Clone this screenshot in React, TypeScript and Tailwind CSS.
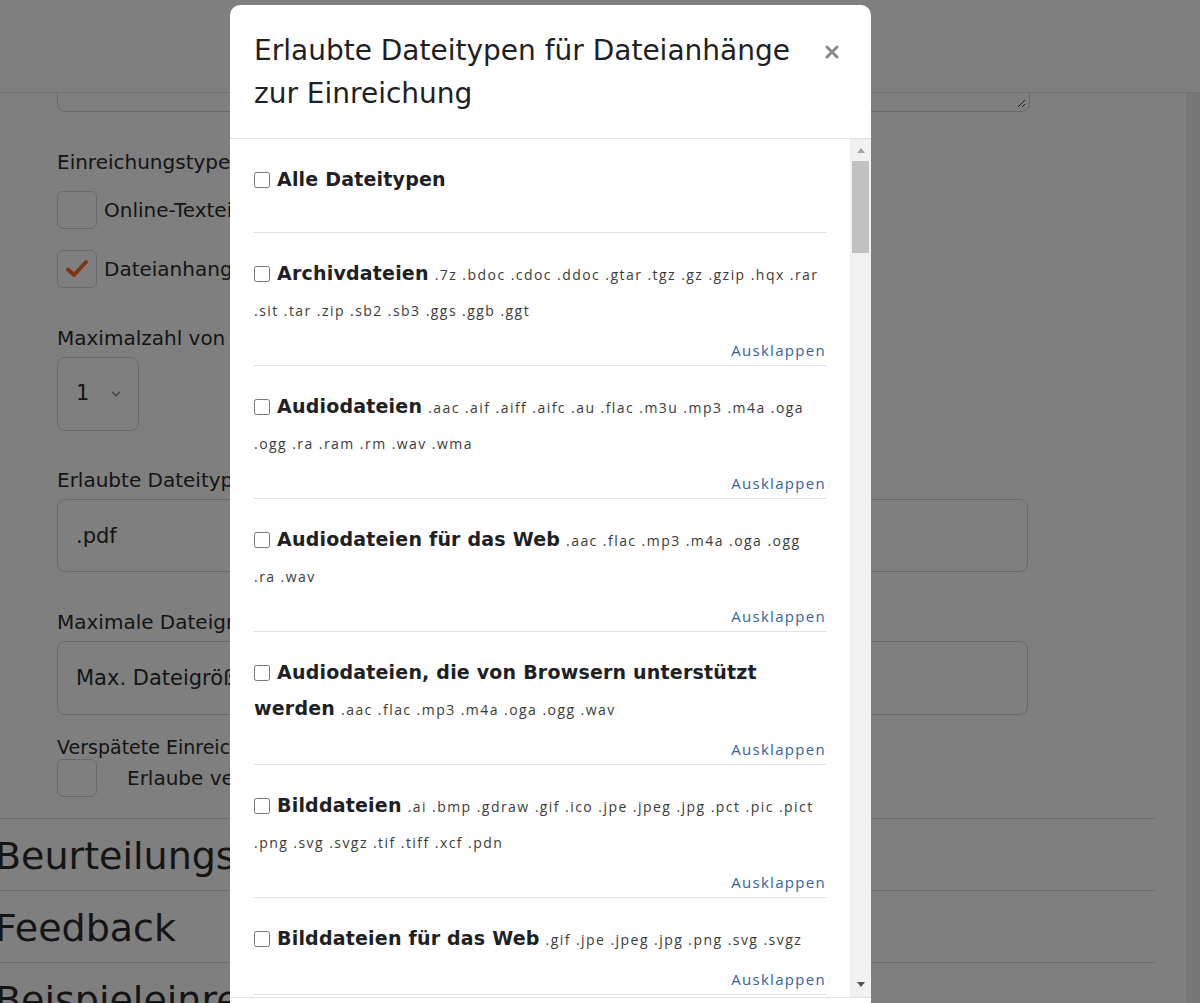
import { ChevronDown } from 'lucide-react'

const TYPES = [
  { label: 'Archivdateien', ext: '.7z .bdoc .cdoc .ddoc .gtar .tgz .gz .gzip .hqx .rar .sit .tar .zip .sb2 .sb3 .ggs .ggb .ggt' },
  { label: 'Audiodateien', ext: '.aac .aif .aiff .aifc .au .flac .m3u .mp3 .m4a .oga .ogg .ra .ram .rm .wav .wma' },
  { label: 'Audiodateien für das Web', ext: '.aac .flac .mp3 .m4a .oga .ogg .ra .wav' },
  { label: 'Audiodateien, die von Browsern unterstützt werden', ext: '.aac .flac .mp3 .m4a .oga .ogg .wav' },
  { label: 'Bilddateien', ext: '.ai .bmp .gdraw .gif .ico .jpe .jpeg .jpg .pct .pic .pict .png .svg .svgz .tif .tiff .xcf .pdn' },
  { label: 'Bilddateien für das Web', ext: '.gif .jpe .jpeg .jpg .png .svg .svgz' },
  { label: 'Dokumentdateien', ext: '.doc .docx .epub .gdoc .odt .oth .ott .pdf .rtf' },
]

const HEAD = "font-['DejaVu_Sans',sans-serif]"

function BoxCheck({ checked = false }: { checked?: boolean }) {
  return (
    <span className="flex h-[38px] w-[40px] shrink-0 items-center justify-center rounded-md border border-[#ced4da] bg-white">
      {checked && (
        <svg width="24" height="22" viewBox="0 0 24 22" fill="none">
          <path d="M3 11.5 L9 17 L21 4" stroke="#ff6a2a" strokeWidth="4" strokeLinecap="round" strokeLinejoin="round" />
        </svg>
      )}
    </span>
  )
}

function Background() {
  return (
    <div className={`${HEAD} text-[#2b2b2b]`}>
      <header className="h-[93px] border-b border-[#e6e6e6] bg-white" />
      <div className="flex h-[910px]">
        <main className="flex-1 overflow-hidden">
          <div className="pl-[57px] pr-[31px]">
            <div className="relative -mt-[41px] h-[60px] w-[973px] rounded-lg border border-[#ced4da]">
              <svg className="absolute bottom-[3px] right-[3px]" width="10" height="10" viewBox="0 0 10 10">
                <path d="M9 2 L2 9 M9 6 L6 9" stroke="#444" strokeWidth="1" />
              </svg>
            </div>

            <div className="mt-[36px] text-[20px] leading-[28px]">Einreichungstypen</div>
            <div className="mt-[15px] flex items-center gap-[7px] text-[20px]">
              <BoxCheck />
              <span>Online-Texteingabe</span>
            </div>
            <div className="mt-[21px] flex items-center gap-[7px] text-[20px]">
              <BoxCheck checked />
              <span>Dateianhang</span>
            </div>

            <div className="mt-[36px] text-[20px] leading-[28px]">Maximalzahl von hochgeladenen Dateien</div>
            <div className="mt-[5px] flex h-[74px] w-[82px] items-center justify-between rounded-lg border border-[#ced4da] pl-[18px] pr-[15px] text-[21px]">
              <span>1</span>
              <ChevronDown size={14} strokeWidth={3} className="text-[#8f8f8f]" />
            </div>

            <div className="mt-[35px] text-[20px] leading-[28px]">Erlaubte Dateitypen</div>
            <div className="mt-[5px] flex h-[73px] w-[971px] items-center rounded-lg border border-[#ced4da] pl-[18px] pt-[3px] text-[21px]">
              .pdf
            </div>

            <div className="mt-[36px] text-[20px] leading-[28px]">Maximale Dateigröße</div>
            <div className="mt-[5px] flex h-[74px] w-[971px] items-center rounded-lg border border-[#ced4da] pl-[18px] pt-[2px] text-[21px]">
              Max. Dateigröße (Einreichung)
            </div>

            <div className="mt-[22px] text-[19px] leading-[20px]">Verspätete Einreichungen</div>
            <div className="mt-[2px] flex items-center gap-[30px] text-[20px]">
              <BoxCheck />
              <span>Erlaube verspätete Einreichungen</span>
            </div>
          </div>

          <div className="mt-[21px] mr-[31px]">
            {['Beurteilungskriterien', 'Feedback', 'Beispieleinreichungen'].map((h) => (
              <div key={h} className="flex h-[72px] items-center border-t border-[#dadada] pt-[2px]">
                <span className="-ml-[5px] text-[38px] leading-none">{h}</span>
              </div>
            ))}
          </div>
        </main>
        <div className="w-[14px] bg-[#eeeeee]" />
      </div>
    </div>
  )
}

function TypeRow({ label, ext, first }: { label: string; ext?: string; first?: boolean }) {
  return (
    <div className="border-b border-[#dee2e6] pt-[22px] pb-[3px]">
      <div className={`${HEAD} pr-[6px] text-[19px] leading-[36px]`}>
        <input type="checkbox" className="mr-[7px] h-[16px] w-[16px] align-[-2px]" />
        <span className="font-bold leading-none tracking-[0.2px] text-[#1d2125]">{label}</span>
        {ext && (
          <span className="ml-[6px] font-['Open_Sans',sans-serif] text-[14px] leading-none tracking-[1.45px] text-[#3a3a3a]">
            {ext}
          </span>
        )}
      </div>
      {first ? (
        <div className="h-[32px]" />
      ) : (
        <div className="mt-[11px] h-[24px] text-right font-['Open_Sans',sans-serif] text-[15px] leading-[24px] tracking-[1.3px] text-[#2f64a6]">
          Ausklappen
        </div>
      )}
    </div>
  )
}

function Modal() {
  return (
    <div className="absolute left-[230px] top-[5px] w-[641px] rounded-[10px] bg-white">
      <div className="flex items-start justify-between border-b border-[#dee2e6] pt-[24px] pb-[23px] pl-[24px] pr-[32px]">
        <h5 className={`${HEAD} text-[28px] leading-[43px] text-[#1d2125]`}>
          Erlaubte Dateitypen für Dateianhänge
          <br />
          zur Einreichung
        </h5>
        <button className="mt-[16px] text-[#8a8a8a]" aria-label="Schließen">
          <svg width="14" height="14" viewBox="0 0 14 14">
            <path d="M2 2 L12 12 M12 2 L2 12" stroke="currentColor" strokeWidth="3" strokeLinecap="round" />
          </svg>
        </button>
      </div>

      <div className="flex h-[858px]">
        <div className="flex-1 overflow-hidden px-[24px]">
          <TypeRow label="Alle Dateitypen" first />
          {TYPES.map((t) => (
            <TypeRow key={t.label} label={t.label} ext={t.ext} />
          ))}
        </div>
        <div className="flex w-[21px] flex-col bg-[#f1f1f1]">
          <div className="flex h-[22px] items-center justify-center">
            <svg width="8" height="5" viewBox="0 0 8 5">
              <path d="M0 5 L4 0 L8 5 Z" fill="#a3a3a3" />
            </svg>
          </div>
          <div className="mx-[2px] h-[92px] bg-[#c1c1c1]" />
          <div className="flex-1" />
          <div className="flex h-[26px] items-center justify-center">
            <svg width="8" height="5" viewBox="0 0 8 5">
              <path d="M0 0 L8 0 L4 5 Z" fill="#505050" />
            </svg>
          </div>
        </div>
      </div>

      <div className="h-[72px] border-t border-[#dee2e6]" />
    </div>
  )
}

export default function App() {
  return (
    <div className="relative h-[1003px] w-[1200px] overflow-hidden bg-white">
      <Background />
      <div className="absolute inset-0 bg-black/50" />
      <Modal />
    </div>
  )
}
